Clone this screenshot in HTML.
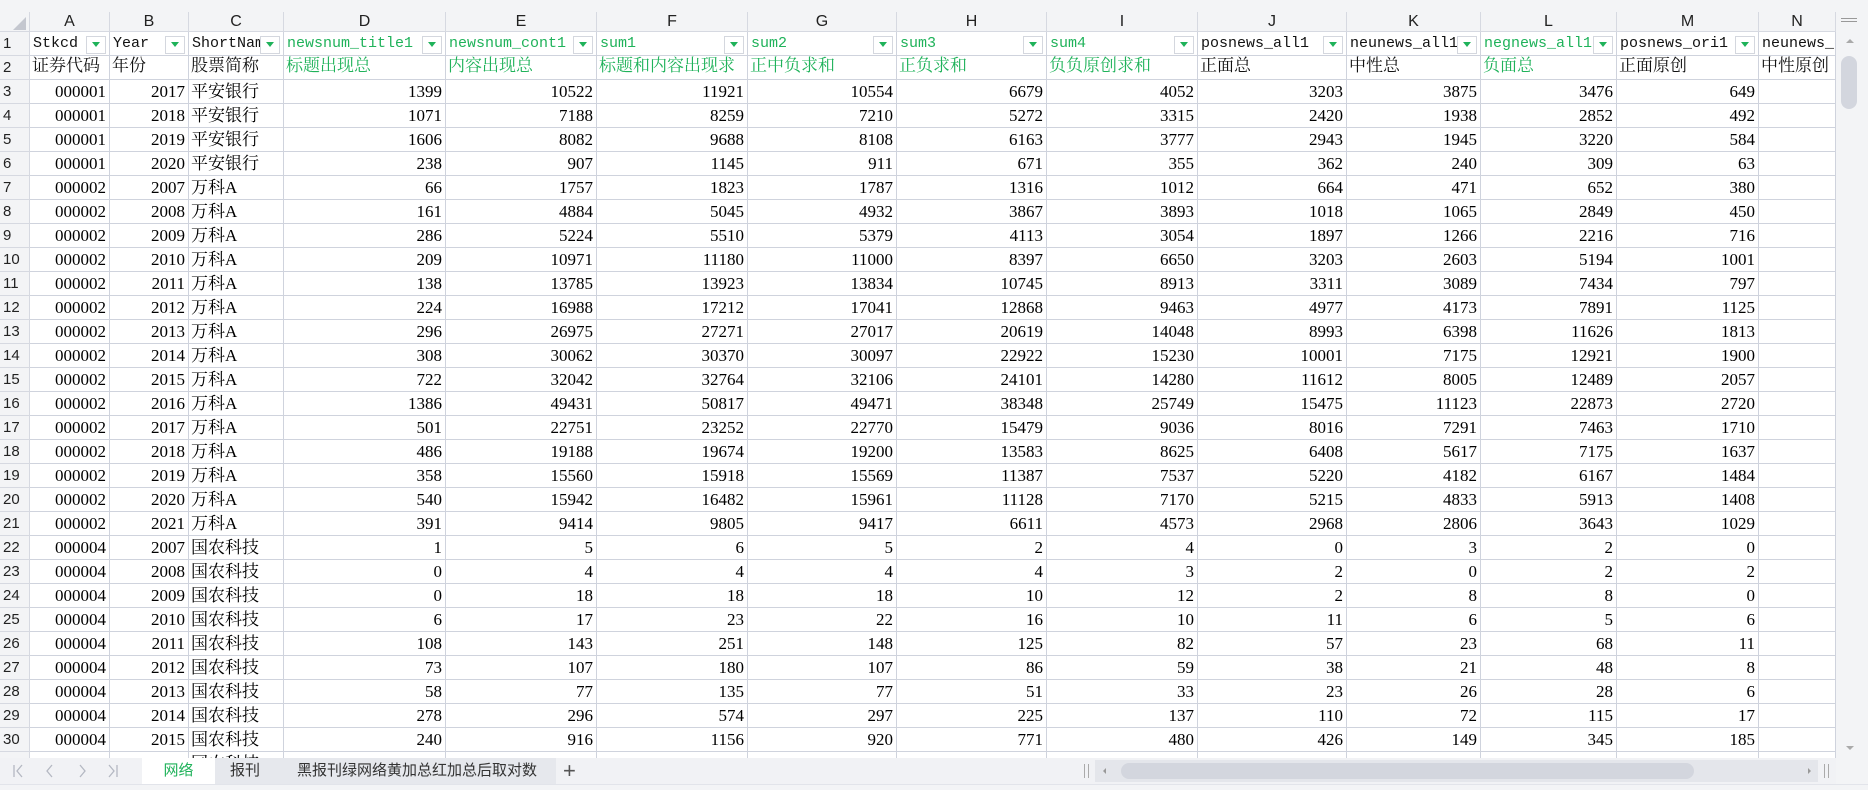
<!DOCTYPE html>
<html><head><meta charset="utf-8"><style>
*{box-sizing:border-box;margin:0;padding:0}
body{width:1868px;height:790px;overflow:hidden;background:#fff;position:relative;font-family:"Liberation Mono","Noto Serif CJK SC",serif;color:#111}
#top{position:absolute;left:0;top:0;width:1868px;height:12px;background:#f3f4f6}
#grid{position:absolute;left:0;top:12px;width:1836px;height:746px;overflow:hidden}
.r{display:flex;height:24px}
.r>div{height:24px;border-right:1px solid #cfd3dd;border-bottom:1px solid #cfd3dd;white-space:nowrap;overflow:hidden;flex:none;font-size:15px;line-height:23px;position:relative}
.r>div:nth-child(1){width:30px;background:#f3f4f6;font-family:"Liberation Sans",sans-serif;font-size:15px;padding-left:3px;color:#222;border-color:#d6d9e1}
.r>div:nth-child(2){width:80px}.r>div:nth-child(3){width:79px}.r>div:nth-child(4){width:95px}
.r>div:nth-child(5){width:162px}.r>div:nth-child(6){width:151px}.r>div:nth-child(7){width:151px}
.r>div:nth-child(8){width:149px}.r>div:nth-child(9){width:150px}.r>div:nth-child(10){width:151px}
.r>div:nth-child(11){width:149px}.r>div:nth-child(12){width:134px}.r>div:nth-child(13){width:136px}
.r>div:nth-child(14){width:142px}.r>div:nth-child(15){width:77px}
.h{height:20px!important}.h>div{height:20px!important;background:#f3f4f6;text-align:center;font-family:"Liberation Sans",sans-serif!important;font-size:16px!important;line-height:20px!important;color:#222;border-color:#d6d9e1!important}
.d>div{text-align:right;padding-right:3px;font-family:"Liberation Serif","Noto Serif CJK SC",serif;font-size:17px;color:#000}
.d>div:nth-child(4){text-align:left;padding-left:2px;font-size:17px}
.d>div:nth-child(1){text-align:left;font-size:15px}
.c>div{padding-left:2px;font-size:17px}
.g{color:#1fb25a}
.f>div:not(:first-child){padding-left:3px}
.f>div:not(:first-child)::after{content:"";position:absolute;right:3px;top:4px;width:18px;height:16px;background:#fff;border:1px solid #d4d7de}
.f>div:not(:first-child)::before{content:"";position:absolute;right:9px;top:10px;border-left:4px solid transparent;border-right:4px solid transparent;border-top:5px solid #1fb25a;z-index:2}
.f>div:last-child::after,.f>div:last-child::before{display:none}
#tabs{position:absolute;left:0;top:758px;width:1836px;height:26px;background:#f1f2f5;font-family:"Liberation Sans","Noto Sans CJK SC",sans-serif;font-size:15px;color:#333}
#bot{position:absolute;left:0;top:784px;width:1868px;height:6px;background:#f3f4f6;border-top:1px solid #e2e4ea}
#vs{position:absolute;left:1836px;top:12px;width:32px;height:772px;background:#f3f4f6}
</style></head><body>
<div id="top"><div style="position:absolute;left:0;top:0;width:30px;height:12px"></div></div>
<div id="grid">
<div class="r h"><div style="position:relative"><span style="position:absolute;left:13px;top:5px;border-left:13px solid transparent;border-bottom:13px solid #c4c7cf"></span></div><div>A</div><div>B</div><div>C</div><div>D</div><div>E</div><div>F</div><div>G</div><div>H</div><div>I</div><div>J</div><div>K</div><div>L</div><div>M</div><div>N</div></div>
<div class="r f"><div>1</div><div>Stkcd</div><div>Year</div><div>ShortNam</div><div class="g">newsnum_title1</div><div class="g">newsnum_cont1</div><div class="g">sum1</div><div class="g">sum2</div><div class="g">sum3</div><div class="g">sum4</div><div>posnews_all1</div><div>neunews_all1</div><div class="g">negnews_all1</div><div>posnews_ori1</div><div>neunews_ori1</div></div>
<div class="r c"><div style="padding-left:3px;font-size:15px">2</div><div>证券代码</div><div>年份</div><div>股票简称</div><div class="g">标题出现总</div><div class="g">内容出现总</div><div class="g">标题和内容出现求</div><div class="g">正中负求和</div><div class="g">正负求和</div><div class="g">负负原创求和</div><div>正面总</div><div>中性总</div><div class="g">负面总</div><div>正面原创</div><div>中性原创</div></div>
<div class="r d"><div>3</div><div>000001</div><div>2017</div><div>平安银行</div><div>1399</div><div>10522</div><div>11921</div><div>10554</div><div>6679</div><div>4052</div><div>3203</div><div>3875</div><div>3476</div><div>649</div><div></div></div>
<div class="r d"><div>4</div><div>000001</div><div>2018</div><div>平安银行</div><div>1071</div><div>7188</div><div>8259</div><div>7210</div><div>5272</div><div>3315</div><div>2420</div><div>1938</div><div>2852</div><div>492</div><div></div></div>
<div class="r d"><div>5</div><div>000001</div><div>2019</div><div>平安银行</div><div>1606</div><div>8082</div><div>9688</div><div>8108</div><div>6163</div><div>3777</div><div>2943</div><div>1945</div><div>3220</div><div>584</div><div></div></div>
<div class="r d"><div>6</div><div>000001</div><div>2020</div><div>平安银行</div><div>238</div><div>907</div><div>1145</div><div>911</div><div>671</div><div>355</div><div>362</div><div>240</div><div>309</div><div>63</div><div></div></div>
<div class="r d"><div>7</div><div>000002</div><div>2007</div><div>万科A</div><div>66</div><div>1757</div><div>1823</div><div>1787</div><div>1316</div><div>1012</div><div>664</div><div>471</div><div>652</div><div>380</div><div></div></div>
<div class="r d"><div>8</div><div>000002</div><div>2008</div><div>万科A</div><div>161</div><div>4884</div><div>5045</div><div>4932</div><div>3867</div><div>3893</div><div>1018</div><div>1065</div><div>2849</div><div>450</div><div></div></div>
<div class="r d"><div>9</div><div>000002</div><div>2009</div><div>万科A</div><div>286</div><div>5224</div><div>5510</div><div>5379</div><div>4113</div><div>3054</div><div>1897</div><div>1266</div><div>2216</div><div>716</div><div></div></div>
<div class="r d"><div>10</div><div>000002</div><div>2010</div><div>万科A</div><div>209</div><div>10971</div><div>11180</div><div>11000</div><div>8397</div><div>6650</div><div>3203</div><div>2603</div><div>5194</div><div>1001</div><div></div></div>
<div class="r d"><div>11</div><div>000002</div><div>2011</div><div>万科A</div><div>138</div><div>13785</div><div>13923</div><div>13834</div><div>10745</div><div>8913</div><div>3311</div><div>3089</div><div>7434</div><div>797</div><div></div></div>
<div class="r d"><div>12</div><div>000002</div><div>2012</div><div>万科A</div><div>224</div><div>16988</div><div>17212</div><div>17041</div><div>12868</div><div>9463</div><div>4977</div><div>4173</div><div>7891</div><div>1125</div><div></div></div>
<div class="r d"><div>13</div><div>000002</div><div>2013</div><div>万科A</div><div>296</div><div>26975</div><div>27271</div><div>27017</div><div>20619</div><div>14048</div><div>8993</div><div>6398</div><div>11626</div><div>1813</div><div></div></div>
<div class="r d"><div>14</div><div>000002</div><div>2014</div><div>万科A</div><div>308</div><div>30062</div><div>30370</div><div>30097</div><div>22922</div><div>15230</div><div>10001</div><div>7175</div><div>12921</div><div>1900</div><div></div></div>
<div class="r d"><div>15</div><div>000002</div><div>2015</div><div>万科A</div><div>722</div><div>32042</div><div>32764</div><div>32106</div><div>24101</div><div>14280</div><div>11612</div><div>8005</div><div>12489</div><div>2057</div><div></div></div>
<div class="r d"><div>16</div><div>000002</div><div>2016</div><div>万科A</div><div>1386</div><div>49431</div><div>50817</div><div>49471</div><div>38348</div><div>25749</div><div>15475</div><div>11123</div><div>22873</div><div>2720</div><div></div></div>
<div class="r d"><div>17</div><div>000002</div><div>2017</div><div>万科A</div><div>501</div><div>22751</div><div>23252</div><div>22770</div><div>15479</div><div>9036</div><div>8016</div><div>7291</div><div>7463</div><div>1710</div><div></div></div>
<div class="r d"><div>18</div><div>000002</div><div>2018</div><div>万科A</div><div>486</div><div>19188</div><div>19674</div><div>19200</div><div>13583</div><div>8625</div><div>6408</div><div>5617</div><div>7175</div><div>1637</div><div></div></div>
<div class="r d"><div>19</div><div>000002</div><div>2019</div><div>万科A</div><div>358</div><div>15560</div><div>15918</div><div>15569</div><div>11387</div><div>7537</div><div>5220</div><div>4182</div><div>6167</div><div>1484</div><div></div></div>
<div class="r d"><div>20</div><div>000002</div><div>2020</div><div>万科A</div><div>540</div><div>15942</div><div>16482</div><div>15961</div><div>11128</div><div>7170</div><div>5215</div><div>4833</div><div>5913</div><div>1408</div><div></div></div>
<div class="r d"><div>21</div><div>000002</div><div>2021</div><div>万科A</div><div>391</div><div>9414</div><div>9805</div><div>9417</div><div>6611</div><div>4573</div><div>2968</div><div>2806</div><div>3643</div><div>1029</div><div></div></div>
<div class="r d"><div>22</div><div>000004</div><div>2007</div><div>国农科技</div><div>1</div><div>5</div><div>6</div><div>5</div><div>2</div><div>4</div><div>0</div><div>3</div><div>2</div><div>0</div><div></div></div>
<div class="r d"><div>23</div><div>000004</div><div>2008</div><div>国农科技</div><div>0</div><div>4</div><div>4</div><div>4</div><div>4</div><div>3</div><div>2</div><div>0</div><div>2</div><div>2</div><div></div></div>
<div class="r d"><div>24</div><div>000004</div><div>2009</div><div>国农科技</div><div>0</div><div>18</div><div>18</div><div>18</div><div>10</div><div>12</div><div>2</div><div>8</div><div>8</div><div>0</div><div></div></div>
<div class="r d"><div>25</div><div>000004</div><div>2010</div><div>国农科技</div><div>6</div><div>17</div><div>23</div><div>22</div><div>16</div><div>10</div><div>11</div><div>6</div><div>5</div><div>6</div><div></div></div>
<div class="r d"><div>26</div><div>000004</div><div>2011</div><div>国农科技</div><div>108</div><div>143</div><div>251</div><div>148</div><div>125</div><div>82</div><div>57</div><div>23</div><div>68</div><div>11</div><div></div></div>
<div class="r d"><div>27</div><div>000004</div><div>2012</div><div>国农科技</div><div>73</div><div>107</div><div>180</div><div>107</div><div>86</div><div>59</div><div>38</div><div>21</div><div>48</div><div>8</div><div></div></div>
<div class="r d"><div>28</div><div>000004</div><div>2013</div><div>国农科技</div><div>58</div><div>77</div><div>135</div><div>77</div><div>51</div><div>33</div><div>23</div><div>26</div><div>28</div><div>6</div><div></div></div>
<div class="r d"><div>29</div><div>000004</div><div>2014</div><div>国农科技</div><div>278</div><div>296</div><div>574</div><div>297</div><div>225</div><div>137</div><div>110</div><div>72</div><div>115</div><div>17</div><div></div></div>
<div class="r d"><div>30</div><div>000004</div><div>2015</div><div>国农科技</div><div>240</div><div>916</div><div>1156</div><div>920</div><div>771</div><div>480</div><div>426</div><div>149</div><div>345</div><div>185</div><div></div></div>
<div class="r d"><div>31</div><div>000004</div><div>2016</div><div>国农科技</div><div></div><div></div><div></div><div></div><div></div><div></div><div></div><div></div><div></div><div></div><div></div></div>
</div>
<div id="tabs">
<svg width="130" height="26" style="position:absolute;left:0;top:0" fill="none" stroke="#b4b8c2" stroke-width="1.3">
<path d="M14 7v12M22 7l-5 6 5 6"/><path d="M52 7l-5 6 5 6"/><path d="M80 7l5 6-5 6"/><path d="M109 7l5 6-5 6M117 7v12"/></svg>
<div style="position:absolute;left:142px;top:0;width:73px;height:26px;background:#fff;color:#1fb25a;text-align:center;line-height:26px">网络</div>
<div style="position:absolute;left:215px;top:0;width:341px;height:26px;background:#e6e8ed"></div>
<div style="position:absolute;left:230px;top:0;line-height:26px">报刊</div>
<div style="position:absolute;left:297px;top:0;line-height:26px">黑报刊绿网络黄加总红加总后取对数</div>
<div style="position:absolute;left:563px;top:0;line-height:26px;font-size:22px;color:#555">+</div>
<div style="position:absolute;left:1084px;top:6px;width:5px;height:14px;border-left:1px solid #aaa;border-right:1px solid #aaa"></div>
<div style="position:absolute;left:1095px;top:2px;width:723px;height:22px;background:#e4e6eb"></div>
<div style="position:absolute;left:1103px;top:10px;border-top:3px solid transparent;border-bottom:3px solid transparent;border-right:3px solid #999"></div>
<div style="position:absolute;left:1121px;top:5px;width:573px;height:16px;background:#d3d6de;border-radius:8px"></div>
<div style="position:absolute;left:1808px;top:10px;border-top:3px solid transparent;border-bottom:3px solid transparent;border-left:3px solid #999"></div>
<div style="position:absolute;left:1824px;top:6px;width:5px;height:14px;border-left:1px solid #aaa;border-right:1px solid #aaa"></div>
</div>
<div id="vs">
<div style="position:absolute;left:5px;top:6px;width:16px;height:4px;border-top:1px solid #999;border-bottom:1px solid #999"></div>
<div style="position:absolute;left:10px;top:27px;border-left:4px solid transparent;border-right:4px solid transparent;border-bottom:4px solid #aaa"></div>
<div style="position:absolute;left:5px;top:44px;width:16px;height:53px;background:#d3d6de;border-radius:8px"></div>
<div style="position:absolute;left:10px;top:734px;border-left:4px solid transparent;border-right:4px solid transparent;border-top:4px solid #aaa"></div>
</div>
<div id="bot"></div>
</body></html>
